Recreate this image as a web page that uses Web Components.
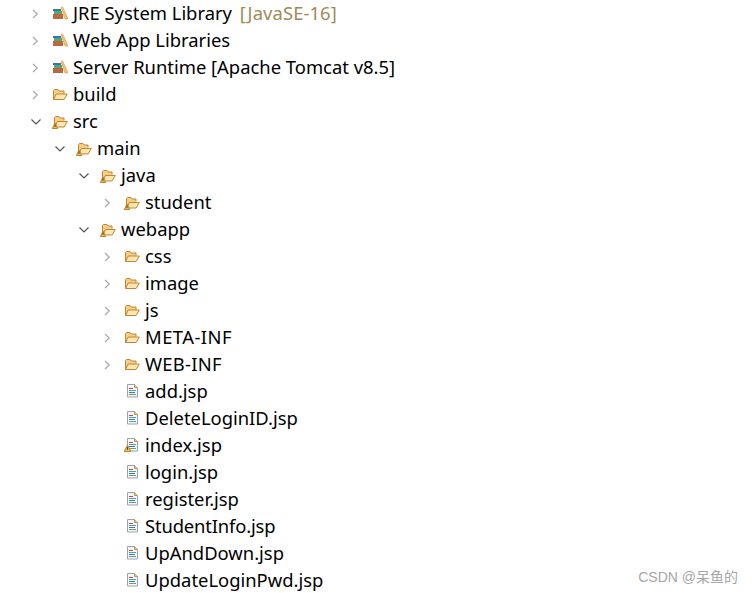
<!DOCTYPE html>
<html>
<head>
<meta charset="utf-8">
<style>
  html, body { margin: 0; background: #fff; }
  body { width: 752px; height: 593px; overflow: hidden; position: relative; }
</style>
</head>
<body>
<project-tree>
  <tree-row level="0" toggle="closed" icon="lib">JRE System Library <span style="color:#a08a55;margin-left:3px;letter-spacing:.1px">[JavaSE-16]</span></tree-row>
  <tree-row level="0" toggle="closed" icon="lib">Web App Libraries</tree-row>
  <tree-row level="0" toggle="closed" icon="lib">Server Runtime [Apache Tomcat v8.5]</tree-row>
  <tree-row level="0" toggle="closed" icon="folder">build</tree-row>
  <tree-row level="0" toggle="open" icon="folder-warn">src</tree-row>
  <tree-row level="1" toggle="open" icon="folder-warn">main</tree-row>
  <tree-row level="2" toggle="open" icon="folder-warn">java</tree-row>
  <tree-row level="3" toggle="closed" icon="folder-warn">student</tree-row>
  <tree-row level="2" toggle="open" icon="folder-warn">webapp</tree-row>
  <tree-row level="3" toggle="closed" icon="folder">css</tree-row>
  <tree-row level="3" toggle="closed" icon="folder">image</tree-row>
  <tree-row level="3" toggle="closed" icon="folder">js</tree-row>
  <tree-row level="3" toggle="closed" icon="folder"><span style="letter-spacing:.45px">META-INF</span></tree-row>
  <tree-row level="3" toggle="closed" icon="folder"><span style="letter-spacing:.25px">WEB-INF</span></tree-row>
  <tree-row level="3" icon="file">add.jsp</tree-row>
  <tree-row level="3" icon="file">DeleteLoginID.jsp</tree-row>
  <tree-row level="3" icon="file-warn">index.jsp</tree-row>
  <tree-row level="3" icon="file">login.jsp</tree-row>
  <tree-row level="3" icon="file">register.jsp</tree-row>
  <tree-row level="3" icon="file"><span style="letter-spacing:-.15px">StudentInfo.jsp</span></tree-row>
  <tree-row level="3" icon="file">UpAndDown.jsp</tree-row>
  <tree-row level="3" icon="file">UpdateLoginPwd.jsp</tree-row>
</project-tree>
<water-mark>CSDN @呆鱼的</water-mark>
<script>
const folderSvg = `<svg width="16" height="16" viewBox="0 0 16 16">
  <path d="M1.5 13.5V4.5l1-1h3.5l1.2 1.5h4.8v2.5" fill="#f5cf88" stroke="#c4842f"/>
  <path d="M1.5 13.5l2.8-5.5h11l-3.2 5.5z" fill="#fce6b4" stroke="#c4842f" stroke-linejoin="round"/>
</svg>`;

const folderWarnSvg = `<svg width="16" height="16" viewBox="0 0 16 16">
  <path d="M2.5 12V4.5l1-1h3.5l1.2 1.5h3.8v2.5" fill="#f5cf88" stroke="#c4842f"/>
  <path d="M3 14l2.3-5.5h10l-3.2 5.5z" fill="#fce6b4" stroke="#c4842f" stroke-linejoin="round"/>
  <path d="M3 10l2.6 5.5H.4z" fill="#f5c65a" stroke="#b9822c" stroke-linejoin="round"/>
  <path d="M3 11.5v2.6" stroke="#5a3d0c"/>
</svg>`;

const libSvg = `<svg width="16" height="16" viewBox="0 0 16 16">
  <rect x="1" y="9" width="10" height="5" fill="#b9693c"/>
  <rect x="2" y="6" width="8" height="3" fill="#55a67f"/>
  <rect x="1" y="4" width="8" height="2" fill="#2f78b0"/>
  <path d="M9 2.5l1.6-.6L16 14h-3z" fill="#f3c27a" stroke="#dd9f4c" stroke-width="0.7"/>
</svg>`;

const fileBody = `
  <path d="M3.5 1.5h7l3 3v9.5h-10z" fill="#f6f8fb" stroke="#97a3b3"/>
  <path d="M10.5 1.5v3h3" fill="#e3c987" stroke="#b8954a"/>
  <path d="M5 5.5h4" stroke="#d8423e"/><path d="M5 7.5h7" stroke="#3fa8a0"/><path d="M5 9.5h6" stroke="#3f74c4"/><path d="M5 11.5h7" stroke="#5fa85f"/>`;

const fileSvg = `<svg width="16" height="16" viewBox="0 0 16 16">${fileBody}</svg>`;

const warnSvg = `<svg width="16" height="16" viewBox="0 0 16 16">${fileBody}
  <path d="M3.5 8l3.4 6.6H.1z" fill="#f2bf4c" stroke="#b9822c" stroke-linejoin="round"/>
  <path d="M3.5 10v2.8" stroke="#5a3d0c"/>
</svg>`;

const icons = { lib: libSvg, folder: folderSvg, "folder-warn": folderWarnSvg, file: fileSvg, "file-warn": warnSvg };

const toggles = {
  closed: `<svg width="12" height="12" viewBox="0 0 12 12"><path d="M3 2l4.2 4L3 10" fill="none" stroke="#a8a8a8" stroke-width="1.2"/></svg>`,
  open: `<svg width="12" height="12" viewBox="0 0 12 12"><path d="M1.5 3.5L6 8l4.5-4.5" fill="none" stroke="#555" stroke-width="1.2"/></svg>`,
};

class ProjectTree extends HTMLElement {
  constructor() {
    super();
    this.attachShadow({ mode: "open" });
    this.shadowRoot.innerHTML = `
      <style>
        :host {
          display: flex;
          flex-direction: column;
          font-family: "Noto Sans", sans-serif;
          font-size: 18.4px;
          color: #000;
        }
      </style>
      <slot></slot>
    `;
  }
}

class TreeRow extends HTMLElement {
  constructor() {
    super();
    this.attachShadow({ mode: "open" });
    this.shadowRoot.innerHTML = `
      <style>
        :host {
          display: flex;
          align-items: center;
          height: 27px;
          white-space: nowrap;
        }
        #toggle { width: 12px; height: 12px; flex: none; display: flex; align-self: flex-start; margin-top: 8px; }
        #icon { width: 16px; height: 16px; flex: none; display: flex; align-self: flex-start; margin: 5px 5px 0 10px; }
        #label { padding-bottom: 2px; }
      </style>
      <span id="toggle"></span>
      <span id="icon"></span>
      <span id="label"><slot></slot></span>
    `;
  }

  connectedCallback() {
    const level = Number(this.getAttribute("level") || 0);
    this.style.paddingLeft = 30 + level * 24 + "px";
    this.shadowRoot.querySelector("#toggle").innerHTML = toggles[this.getAttribute("toggle")] || "";
    this.shadowRoot.querySelector("#icon").innerHTML = icons[this.getAttribute("icon")] || "";
  }
}

class WaterMark extends HTMLElement {
  constructor() {
    super();
    this.attachShadow({ mode: "open" });
    this.shadowRoot.innerHTML = `
      <style>
        :host {
          position: absolute;
          right: 14px;
          top: 568px;
          font-family: "Liberation Sans", "Noto Sans CJK SC", sans-serif;
          font-size: 14px;
          line-height: 18px;
          color: #a6a6a6;
          white-space: nowrap;
        }
      </style>
      <slot></slot>
    `;
  }
}

customElements.define("project-tree", ProjectTree);
customElements.define("tree-row", TreeRow);
customElements.define("water-mark", WaterMark);
</script>
</body>
</html>
